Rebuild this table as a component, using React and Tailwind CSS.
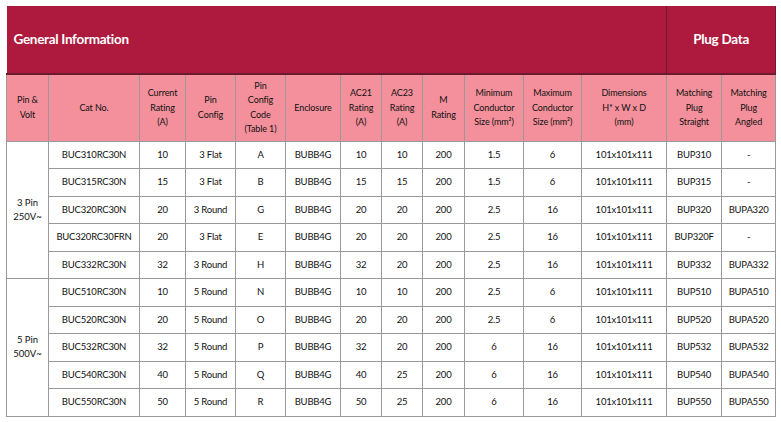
const headers = [
  ['Pin &', 'Volt'],
  ['Cat No.'],
  ['Current', 'Rating', '(A)'],
  ['Pin', 'Config'],
  ['Pin', 'Config', 'Code', '(Table 1)'],
  ['Enclosure'],
  ['AC21', 'Rating', '(A)'],
  ['AC23', 'Rating', '(A)'],
  ['M', 'Rating'],
  ['Minimum', 'Conductor', 'Size (mm²)'],
  ['Maximum', 'Conductor', 'Size (mm²)'],
  ['Dimensions', 'H* x W x D', '(mm)'],
  ['Matching', 'Plug', 'Straight'],
  ['Matching', 'Plug', 'Angled'],
]

const widths = [42, 91, 46, 50, 50, 55, 41, 41, 42, 59, 58, 85, 55, 54]

const groups = [
  {
    label: ['3 Pin', '250V~'],
    rows: [
      ['BUC310RC30N', '10', '3 Flat', 'A', 'BUBB4G', '10', '10', '200', '1.5', '6', '101x101x111', 'BUP310', '-'],
      ['BUC315RC30N', '15', '3 Flat', 'B', 'BUBB4G', '15', '15', '200', '1.5', '6', '101x101x111', 'BUP315', '-'],
      ['BUC320RC30N', '20', '3 Round', 'G', 'BUBB4G', '20', '20', '200', '2.5', '16', '101x101x111', 'BUP320', 'BUPA320'],
      ['BUC320RC30FRN', '20', '3 Flat', 'E', 'BUBB4G', '20', '20', '200', '2.5', '16', '101x101x111', 'BUP320F', '-'],
      ['BUC332RC30N', '32', '3 Round', 'H', 'BUBB4G', '32', '20', '200', '2.5', '16', '101x101x111', 'BUP332', 'BUPA332'],
    ],
  },
  {
    label: ['5 Pin', '500V~'],
    rows: [
      ['BUC510RC30N', '10', '5 Round', 'N', 'BUBB4G', '10', '10', '200', '2.5', '6', '101x101x111', 'BUP510', 'BUPA510'],
      ['BUC520RC30N', '20', '5 Round', 'O', 'BUBB4G', '20', '20', '200', '2.5', '6', '101x101x111', 'BUP520', 'BUPA520'],
      ['BUC532RC30N', '32', '5 Round', 'P', 'BUBB4G', '32', '20', '200', '6', '16', '101x101x111', 'BUP532', 'BUPA532'],
      ['BUC540RC30N', '40', '5 Round', 'Q', 'BUBB4G', '40', '25', '200', '6', '16', '101x101x111', 'BUP540', 'BUPA540'],
      ['BUC550RC30N', '50', '5 Round', 'R', 'BUBB4G', '50', '25', '200', '6', '16', '101x101x111', 'BUP550', 'BUPA550'],
    ],
  },
]

export default function App() {
  return (
    <div className="w-[781px] h-[422px] bg-white pt-[6px] pl-[6px] font-['Lato','Liberation_Sans',sans-serif] text-[#111]">
      <table className="table-fixed border-collapse w-[770px]">
        <colgroup>
          {widths.map((w, i) => (
            <col key={i} style={{ width: w }} />
          ))}
        </colgroup>
        <thead>
          {/* Maroon band */}
          <tr className="h-[68px] bg-[#ae1a3d]">
            <th
              colSpan={12}
              className="border-b-2 border-[#6c1a2e] text-left pl-[7px] text-white text-[13.5px] font-bold tracking-[-0.3px]"
            >
              General Information
            </th>
            <th
              colSpan={2}
              className="border-b-2 border-x border-[#6c1a2e] text-center text-white text-[13.5px] font-bold tracking-[-0.3px]"
            >
              Plug Data
            </th>
          </tr>
          {/* Pink column labels */}
          <tr className="h-[67px] bg-[#f3909b]">
            {headers.map((lines, i) => (
              <th
                key={i}
                className="border-x border-[#9d9898] font-normal text-[9px] leading-[14.5px] text-center align-middle px-0 tracking-[-0.1px]"
              >
                {lines.map((l, j) => (
                  <div key={j}>{l}</div>
                ))}
              </th>
            ))}
          </tr>
        </thead>
        <tbody>
          {groups.map((g) =>
            g.rows.map((row, ri) => (
              <tr key={row[0]} className="h-[27.5px]">
                {ri === 0 && (
                  <td
                    rowSpan={g.rows.length}
                    className="border border-[#9d9898] text-center text-[9.5px] leading-[14px]"
                  >
                    {g.label.map((l) => (
                      <div key={l}>{l}</div>
                    ))}
                  </td>
                )}
                {row.map((cell, ci) => (
                  <td
                    key={ci}
                    className="border border-[#9d9898] text-center text-[9.5px] tracking-[-0.2px] whitespace-nowrap"
                  >
                    {cell}
                  </td>
                ))}
              </tr>
            ))
          )}
        </tbody>
      </table>
    </div>
  )
}
